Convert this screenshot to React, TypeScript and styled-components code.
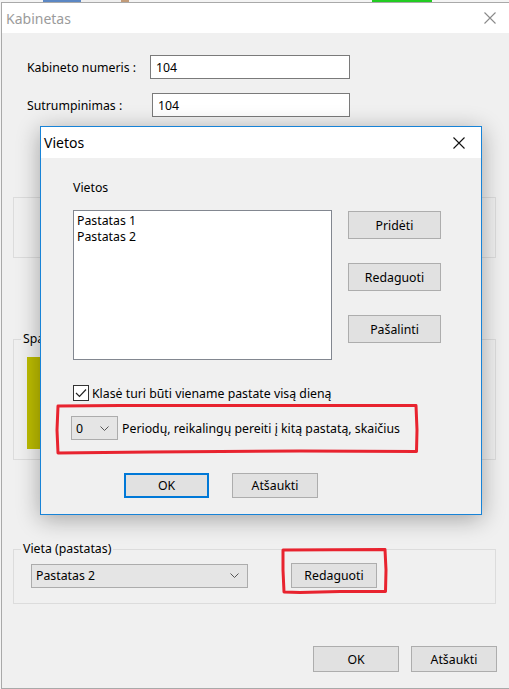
import React from "react";
import styled, { createGlobalStyle } from "styled-components";

const Global = createGlobalStyle`
  html, body {
    margin: 0;
    padding: 0;
    background: #f4f4f4;
    font-family: "Segoe UI", "Noto Sans", sans-serif;
    font-size: 12.3px;
    color: #000;
  }
`;

const Page = styled.div`
  position: relative;
  width: 509px;
  height: 689px;
  overflow: hidden;
  background: #f4f4f4;
`;

// strip of the app behind the dialogs
const Backdrop = styled.div`
  height: 2px;
  display: flex;
`;

const BackBit = styled.div<{ $w: number; $c: string }>`
  width: ${p => p.$w}px;
  background: ${p => p.$c};
`;

const Window = styled.div`
  margin-left: 1px;
  width: 508px;
  height: 685px;
  border: 1px solid #a9a9a9;
  border-right: none;
  background: #f0f0f0;
  display: flex;
  flex-direction: column;
`;

const TitleBar = styled.div<{ $active?: boolean }>`
  height: ${p => (p.$active ? 31 : 30)}px;
  flex: none;
  background: #fff;
  display: flex;
  align-items: center;
  justify-content: space-between;
  padding: 0 ${p => (p.$active ? 16 : 14)}px 0 ${p => (p.$active ? 3 : 4)}px;
  font-size: 14px;
  color: ${p => (p.$active ? "#000" : "#9b9b9b")};
`;

const CloseIcon = ({ color }: { color: string }) => (
  <svg width="12" height="12" viewBox="0 0 12 12">
    <path d="M0.5 0.5 L11.5 11.5 M11.5 0.5 L0.5 11.5" stroke={color} strokeWidth="1.1" fill="none" />
  </svg>
);

const Body = styled.div`
  flex: 1;
  display: flex;
  flex-direction: column;
  padding: 22px 13px 0 11px;
`;

const FieldRow = styled.div<{ $gap?: number }>`
  display: flex;
  align-items: center;
  margin-top: ${p => p.$gap ?? 0}px;
  padding-left: 14px;
`;

const FieldLabel = styled.label<{ $w: number }>`
  width: ${p => p.$w}px;
  flex: none;
`;

const TextBox = styled.div<{ $w: number }>`
  width: ${p => p.$w}px;
  height: 24px;
  box-sizing: border-box;
  border: 1px solid #7a7a7a;
  background: #fff;
  padding: 0 5px;
  display: flex;
  align-items: center;
`;

const Group = styled.div<{ $h: number; $gap: number }>`
  position: relative;
  height: ${p => p.$h}px;
  box-sizing: border-box;
  margin-top: ${p => p.$gap}px;
  border: 1px solid #dcdcdc;
  width: 483px;
`;

const Caption = styled.span`
  position: absolute;
  top: -9px;
  left: 7px;
  padding: 0 2px;
  background: #f0f0f0;
  line-height: 16px;
`;

const Swatch = styled.div`
  margin: 17px 0 0 13px;
  width: 80px;
  height: 92px;
  background: #bcbc00;
`;

const GroupRow = styled.div`
  display: flex;
  align-items: center;
  gap: 43px;
  padding: 13px 0 0 17px;
`;

const Combo = styled.div<{ $w: number; $h: number }>`
  width: ${p => p.$w}px;
  height: ${p => p.$h}px;
  box-sizing: border-box;
  border: 1px solid #acacac;
  background: #e5e5e5;
  display: flex;
  align-items: center;
  justify-content: space-between;
  padding: 0 8px 0 4px;
  flex: none;
`;

const Chevron = () => (
  <svg width="9" height="5" viewBox="0 0 9 5">
    <path d="M0.5 0.5 L4.5 4.5 L8.5 0.5" stroke="#555" strokeWidth="1" fill="none" />
  </svg>
);

const Button = styled.div<{ $w: number; $h: number; $default?: boolean }>`
  width: ${p => p.$w}px;
  height: ${p => p.$h}px;
  box-sizing: border-box;
  border: ${p => (p.$default ? "2px solid #0078d7" : "1px solid #adadad")};
  background: #e1e1e1;
  display: flex;
  align-items: center;
  justify-content: center;
  flex: none;
`;

const BottomBar = styled.div`
  display: flex;
  justify-content: flex-end;
  gap: 12px;
  margin-top: 42px;
`;

// the modal window on top
const Dialog = styled.div`
  position: absolute;
  left: 40px;
  top: 126px;
  width: 442px;
  height: 389px;
  box-sizing: border-box;
  border: 1px solid #1883d7;
  background: #f0f0f0;
  box-shadow: 0 4px 22px rgba(0, 0, 0, 0.32);
  display: flex;
  flex-direction: column;
`;

const DialogBody = styled.div`
  padding: 22px 0 0 32px;
  display: flex;
  flex-direction: column;
`;

const SectionLabel = styled.div`
  line-height: 16px;
`;

const ListArea = styled.div`
  display: grid;
  grid-template-columns: 259px 93px;
  column-gap: 16px;
  margin-top: 14px;
  align-items: start;
`;

const ListBox = styled.div`
  height: 150px;
  box-sizing: border-box;
  border: 1px solid #828790;
  background: #fff;
  padding: 2px 3px;
  line-height: 16px;
`;

const ButtonColumn = styled.div`
  display: flex;
  flex-direction: column;
  gap: 24px;
  padding-top: 1px;
`;

const CheckRow = styled.div`
  display: flex;
  align-items: center;
  gap: 3px;
  margin-top: 25px;
  height: 16px;
`;

const CheckBox = styled.div`
  width: 16px;
  height: 16px;
  box-sizing: border-box;
  border: 1px solid #333;
  background: #fff;
  display: flex;
  align-items: center;
  justify-content: center;
`;

const PeriodRow = styled.div`
  display: flex;
  align-items: center;
  gap: 4px;
  margin: 15px 0 0 -2px;
`;

const DialogButtons = styled.div`
  display: flex;
  gap: 23px;
  margin: 33px 0 0 51px;
`;

const Marker = styled.svg`
  position: absolute;
  left: 0;
  top: 0;
  pointer-events: none;
`;

export default function App() {
  return (
    <Page>
      <Global />
      <Backdrop>
        <BackBit $w={43} $c="#f4f4f4" />
        <BackBit $w={38} $c="#5b87c4" />
        <BackBit $w={40} $c="#efefef" />
        <BackBit $w={8} $c="#c29b78" />
        <BackBit $w={243} $c="#f4f4f4" />
        <BackBit $w={60} $c="#22cc22" />
        <BackBit $w={77} $c="#f4f4f4" />
      </Backdrop>
      <Window>
        <TitleBar>
          <span>Kabinetas</span>
          <CloseIcon color="#8a8a8a" />
        </TitleBar>
        <Body>
          <FieldRow>
            <FieldLabel $w={123}>Kabineto numeris :</FieldLabel>
            <TextBox $w={200}>104</TextBox>
          </FieldRow>
          <FieldRow $gap={14}>
            <FieldLabel $w={125}>Sutrumpinimas :</FieldLabel>
            <TextBox $w={198}>104</TextBox>
          </FieldRow>
          <Group $h={61} $gap={80} />
          <Group $h={121} $gap={81}>
            <Caption>Spalva</Caption>
            <Swatch />
          </Group>
          <Group $h={55} $gap={89}>
            <Caption>Vieta (pastatas)</Caption>
            <GroupRow>
              <Combo $w={217} $h={24}>
                <span>Pastatas 2</span>
                <Chevron />
              </Combo>
              <Button $w={86} $h={25}>Redaguoti</Button>
            </GroupRow>
          </Group>
          <BottomBar>
            <Button $w={86} $h={26}>OK</Button>
            <Button $w={86} $h={26}>Atšaukti</Button>
          </BottomBar>
        </Body>
      </Window>

      <Dialog>
        <TitleBar $active>
          <span>Vietos</span>
          <CloseIcon color="#111" />
        </TitleBar>
        <DialogBody>
          <SectionLabel>Vietos</SectionLabel>
          <ListArea>
            <ListBox>
              <div>Pastatas 1</div>
              <div>Pastatas 2</div>
            </ListBox>
            <ButtonColumn>
              <Button $w={93} $h={28}>Pridėti</Button>
              <Button $w={93} $h={28}>Redaguoti</Button>
              <Button $w={93} $h={28}>Pašalinti</Button>
            </ButtonColumn>
          </ListArea>
          <CheckRow>
            <CheckBox>
              <svg width="12" height="10" viewBox="0 0 12 10">
                <path d="M1 5 L4.5 8.5 L11 1.5" stroke="#222" strokeWidth="1.2" fill="none" />
              </svg>
            </CheckBox>
            <span>Klasė turi būti viename pastate visą dieną</span>
          </CheckRow>
          <PeriodRow>
            <Combo $w={47} $h={24}>
              <span>0</span>
              <Chevron />
            </Combo>
            <span>Periodų, reikalingų pereiti į kitą pastatą, skaičius</span>
          </PeriodRow>
          <DialogButtons>
            <Button $w={85} $h={25} $default>OK</Button>
            <Button $w={86} $h={25}>Atšaukti</Button>
          </DialogButtons>
        </DialogBody>
      </Dialog>

      <Marker width="509" height="689" viewBox="0 0 509 689">
        <g stroke="#e8232f" strokeWidth="3" fill="none" strokeLinecap="round" strokeLinejoin="round">
          <path d="M58 406 L120 405.5 L416 405.5 L417 430 L416.5 451.5 L300 451 L150 452 L58 453 L57 430 Z" />
          <path d="M283 550 L385 549.5 L386 570 L385.5 591.5 L340 591.5 L300 592.5 L284 592 L283 570 Z" />
        </g>
      </Marker>
    </Page>
  );
}
